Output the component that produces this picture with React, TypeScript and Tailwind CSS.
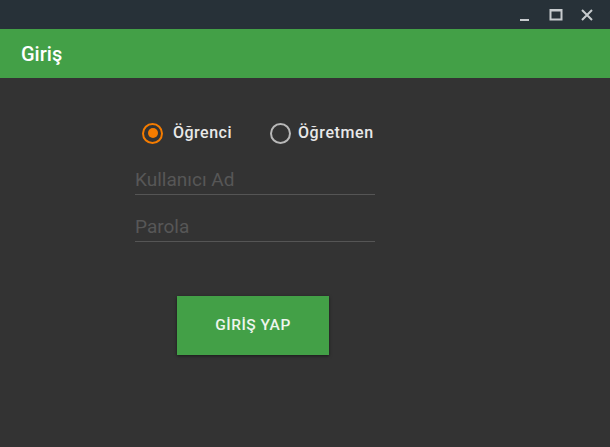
import React from "react";

export default function App() {
  const font = { fontFamily: "Roboto, 'Noto Sans', sans-serif" };
  return (
    <div className="w-[610px] h-[447px] flex flex-col bg-[#333333] overflow-hidden" style={font}>
      <div className="h-[29px] bg-[#273138] flex items-center justify-end pr-[16px] gap-[17px]">
        <svg width="14" height="14" viewBox="0 0 14 14">
          <rect x="2" y="11" width="9" height="2" fill="#c7cbce" />
        </svg>
        <svg width="14" height="14" viewBox="0 0 14 14">
          <rect x="1.5" y="2" width="11" height="9.5" fill="none" stroke="#c7cbce" strokeWidth="2" />
          <rect x="1.5" y="2" width="11" height="1.5" fill="#c7cbce" />
        </svg>
        <svg width="14" height="14" viewBox="0 0 14 14">
          <path d="M2 2 L12 12 M12 2 L2 12" stroke="#c7cbce" strokeWidth="2" />
        </svg>
      </div>
      <div className="h-[49px] bg-[#43a047] flex items-center pl-[21px]">
        <span className="text-[20px] font-medium text-white">Giriş</span>
      </div>
      <div className="flex-1 flex flex-col items-start pl-[135px] pt-[43px]">
        <div className="flex items-center h-[24px] ml-[7px]">
          <div className="flex items-center gap-[10px] w-[128px]">
            <div className="w-[21px] h-[21px] rounded-full border-[2.5px] border-[#f57c00] flex items-center justify-center">
              <div className="w-[10px] h-[10px] rounded-full bg-[#f57c00]" />
            </div>
            <span className="text-[16px] font-medium tracking-[0.5px] text-[#e8e8e8]">Öğrenci</span>
          </div>
          <div className="flex items-center gap-[7px]">
            <div className="w-[21px] h-[21px] rounded-full border-[2.5px] border-[#b8b8b8]" />
            <span className="text-[16px] font-medium tracking-[0.6px] text-[#e8e8e8]">Öğretmen</span>
          </div>
        </div>
        <div className="w-[240px] mt-[13px] h-[37px] border-b border-[#555555] flex items-end pb-0">
          <span className="text-[19px] text-[#575757]">Kullanıcı Ad</span>
        </div>
        <div className="w-[240px] mt-[9px] h-[38px] border-b border-[#555555] flex items-end pb-0">
          <span className="text-[19px] text-[#575757]">Parola</span>
        </div>
        <div className="ml-[42px] mt-[54px] w-[152px] h-[59px] bg-[#43a047] shadow-[0_1px_3px_rgba(0,0,0,0.5)] flex items-center justify-center">
          <span className="text-[15.5px] font-medium text-[#eef5ee] tracking-[0.5px]">GİRİŞ YAP</span>
        </div>
      </div>
    </div>
  );
}
